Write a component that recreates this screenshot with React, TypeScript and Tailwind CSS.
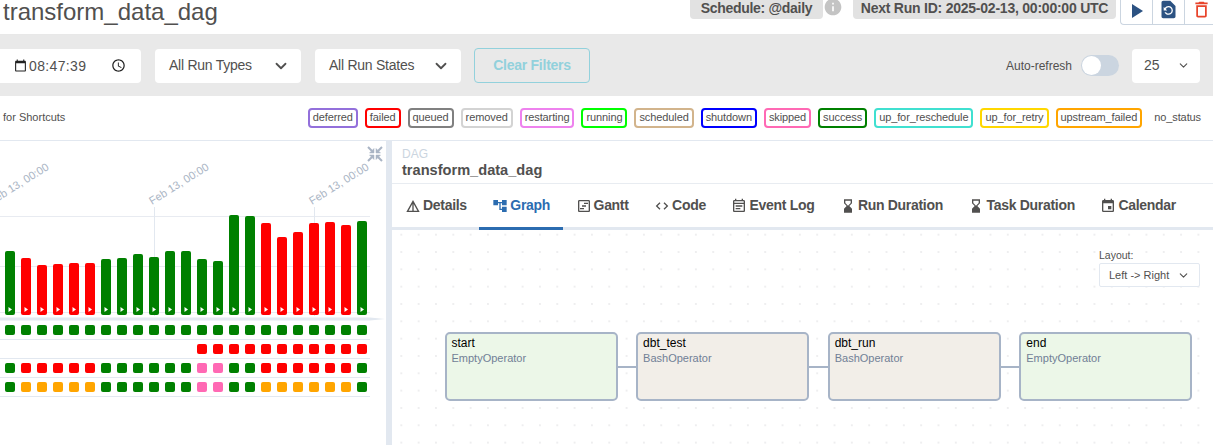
import React from "react";
import { MdDetails, MdAccountTree, MdOutlineViewTimeline, MdOutlineEventNote, MdHourglassBottom, MdEvent, MdPlayArrow, MdRestorePage, MdDeleteOutline, MdInfo, MdOutlineAccessTime, MdCalendarToday } from "react-icons/md";
import { BiCode } from "react-icons/bi";
import { ChevronDown } from "lucide-react";

const font = { fontFamily: '"Liberation Sans", Arial, sans-serif' };

const chips: [string, string][] = [
  ["deferred", "border-[#9370db]"],
  ["failed", "border-[#ff0000]"],
  ["queued", "border-[#808080]"],
  ["removed", "border-[#d3d3d3]"],
  ["restarting", "border-[#ee82ee]"],
  ["running", "border-[#00ff00]"],
  ["scheduled", "border-[#d2b48c]"],
  ["shutdown", "border-[#0000ff]"],
  ["skipped", "border-[#ff69b4]"],
  ["success", "border-[#008000]"],
  ["up_for_reschedule", "border-[#40e0d0]"],
  ["up_for_retry", "border-[#ffd700]"],
  ["upstream_failed", "border-[#ffa500]"],
  ["no_status", "border-transparent"],
];

const tops = [348, 369, 390, 387, 384, 384, 372, 369, 357, 366, 348, 348, 372, 378, 240, 243, 264, 306, 291, 264, 261, 270, 258];
const G = "#008000", R = "#ff0000", P = "#ff69b4", O = "#ffa500";
const barColors = [G, R, R, R, R, R, G, G, G, G, G, G, G, G, G, G, R, R, R, R, R, R, G];

const rows: (string | null)[][] = [
  Array(23).fill(G),
  [...Array(12).fill(null), ...Array(11).fill(R)],
  [G, R, R, R, R, R, G, G, G, G, G, G, P, P, G, G, R, R, R, R, R, R, G],
  [G, O, O, O, O, O, G, G, G, G, G, G, P, P, G, G, O, O, O, O, O, O, G],
];

function Chart() {
  return (
    <svg width="386" height="180" viewBox="0 141 386 180" className="block shrink-0">
      {[216, 266, 312].map((y) => (
        <line key={y} x1="0" x2="370" y1={y + 0.5} y2={y + 0.5} stroke="#e8ebf1" />
      ))}
      {[154, 314].map((x) => (
        <line key={x} x1={x + 0.5} x2={x + 0.5} y1="207" y2="316" stroke="#e2e8f0" />
      ))}
      {[-6, 154, 314].map((x) => (
        <text key={x} x={x - 2} y="205" fontSize="11" fill="#a9b4c4" transform={`rotate(-32 ${x - 2} 205)`} style={font}>
          Feb 13, 00:00
        </text>
      ))}
      <path d="M0 317.5 H370 L385 319 L370 320.5 H0 Z" fill="#e2e8f0" />
      {tops.map((t, i) => {
        const y = 135 + t / 3;
        const x = 5 + i * 16;
        return (
          <g key={i}>
            <rect x={x} y={y} width="10" height={315 - y} rx="2" fill={barColors[i]} />
            <path d={`M${x + 3.5} 307 L${x + 7} 309.5 L${x + 3.5} 312 Z`} fill="#ffffff" />
          </g>
        );
      })}
    </svg>
  );
}

function CollapseIcon() {
  return (
    <svg width="16" height="16" viewBox="0 0 16 16" className="absolute left-[367px] top-[5px]" fill="#a9b4c4" stroke="#a9b4c4">
      <path d="M1 1 L5 5 M15 1 L11 5 M1 15 L5 11 M15 15 L11 11" strokeWidth="2" />
      <path d="M7 7 V2.5 L2.5 7 Z M9 7 V2.5 L13.5 7 Z M7 9 V13.5 L2.5 9 Z M9 9 V13.5 L13.5 9 Z" strokeWidth="0.5" />
    </svg>
  );
}

function Node({ name, op, bg }: { name: string; op: string; bg: string }) {
  return (
    <div className={`h-[69px] w-[173px] shrink-0 rounded-[5px] border-2 border-[#a7b4c7] px-[5px] pt-[1px] ${bg}`}>
      <div className="text-[12px] leading-[16px] text-black">{name}</div>
      <div className="text-[11px] leading-[14px] text-[#718096]">{op}</div>
    </div>
  );
}

const Edge = () => <div className="h-[2px] w-[18.6px] shrink-0 bg-[#a7b4c7]" />;

const tabs: [string, React.ComponentType<{ size?: number; className?: string }>, boolean][] = [
  ["Details", MdDetails, false],
  ["Graph", MdAccountTree, true],
  ["Gantt", MdOutlineViewTimeline, false],
  ["Code", BiCode, false],
  ["Event Log", MdOutlineEventNote, false],
  ["Run Duration", MdHourglassBottom, false],
  ["Task Duration", MdHourglassBottom, false],
  ["Calendar", MdEvent, false],
];

export default function App() {
  return (
    <div style={font} className="h-[445px] w-[1213px] overflow-hidden bg-white text-[#51504f]">
      <header className="flex h-[35px] items-start overflow-hidden border-b border-[#e8e8e8]">
        <h1 className="ml-[3px] text-[24px] leading-[24px] text-[#51504f]">transform_data_dag</h1>
        <div className="ml-auto flex items-start">
          <span className="flex h-[19px] w-[133px] items-center justify-center rounded-b-[4px] bg-[#e2e2e2] pb-[3px] text-[14px] font-bold tracking-[-0.3px] text-[#51504f]">Schedule: @daily</span>
          <MdInfo size={20} className="mr-[10px] mt-[-3px] text-[#c4c4c4]" />
          <span className="flex h-[19px] w-[263px] items-center justify-center rounded-b-[4px] bg-[#e2e2e2] pb-[3px] text-[14px] font-bold tracking-[-0.23px] text-[#51504f]">Next Run ID: 2025-02-13, 00:00:00 UTC</span>
          <div className="ml-[4px] flex h-[25px] w-[93px] rounded-bl-[4px] border-b border-l border-[#cbd5e0]">
            <div className="flex w-[32px] items-center justify-center border-r border-[#cbd5e0]"><MdPlayArrow size={24} className="mt-[-2px] text-[#2c5282]" /></div>
            <div className="flex w-[33px] items-center justify-center border-r border-[#cbd5e0]"><MdRestorePage size={21} className="mt-[-6px] text-[#2c5282]" /></div>
            <div className="flex w-[28px] items-center justify-center pl-[4px]"><MdDeleteOutline size={21} className="mt-[-6px] text-[#e8442b]" /></div>
          </div>
        </div>
      </header>

      <div className="flex h-[61px] items-center bg-[#e9e9e9] pr-[13px]">
        <div className="ml-[-20px] flex h-[34px] w-[161px] items-center rounded-[4px] bg-white pl-[34px] pr-[15px] text-[14px]">
          <MdCalendarToday size={13} className="mr-[2px] text-[#222]" />
          <span className="mt-[1px] tracking-[0.35px]">08:47:39</span>
          <MdOutlineAccessTime size={15} className="ml-auto text-[#222]" />
        </div>
        <div className="ml-[14px] flex h-[34px] w-[146px] items-center justify-between rounded-[4px] bg-white pl-[14px] pr-[11px] text-[14px] tracking-[-0.25px]">
          <span>All Run Types</span> <ChevronDown size={18} strokeWidth={2.4} />
        </div>
        <div className="ml-[14px] flex h-[34px] w-[146px] items-center justify-between rounded-[4px] bg-white pl-[14px] pr-[11px] text-[14px] tracking-[-0.25px]">
          <span>All Run States</span> <ChevronDown size={18} strokeWidth={2.4} />
        </div>
        <div className="ml-[13px] flex h-[35px] w-[116px] items-center justify-center rounded-[4px] border border-[#92d1dc] pb-[1px] text-[14px] font-bold tracking-[-0.25px] text-[#92d1dc]">Clear Filters</div>
        <span className="ml-auto text-[12px]">Auto-refresh</span>
        <div className="ml-[9px] flex h-[21px] w-[38px] items-center rounded-full bg-[#cbd5e0] p-[1px]">
          <div className="h-[19px] w-[19px] rounded-full bg-white" />
        </div>
        <div className="ml-[13px] flex h-[34px] w-[68px] items-center justify-between rounded-[4px] bg-white pl-[12px] pr-[10px] text-[14px]">
          <span>25</span> <ChevronDown size={13} strokeWidth={2} />
        </div>
      </div>

      <div className="flex h-[45px] items-center border-b border-[#e2e8f0] pb-[1px]">
        <span className="ml-[3px] text-[11px]">for Shortcuts</span>
        <div className="ml-auto mr-[7px] flex gap-[7px]">
          {chips.map(([t, c]) => (
            <span key={t} className={`flex h-[20px] items-center rounded-[4px] border-2 px-[3px] text-[11px] tracking-[-0.105px] ${c}`}>{t}</span>
          ))}
        </div>
      </div>

      <div className="flex h-[304px]">
        <div className="w-[386px] shrink-0 overflow-hidden">
          <div className="relative">
            <CollapseIcon />
            <Chart />
          </div>
          <div className="w-[370px]">
            {rows.map((r, i) => (
              <div key={i} className="flex h-[19px] items-center gap-[6px] border-b border-[#e2e8f0] pl-[5px]">
                {r.map((c, j) =>
                  c ? (
                    <div key={j} className="h-[10px] w-[10px] shrink-0 rounded-[2px]" style={{ backgroundColor: c }} />
                  ) : (
                    <div key={j} className="h-[10px] w-[10px] shrink-0" />
                  )
                )}
              </div>
            ))}
          </div>
        </div>
        <div className="w-[6px] shrink-0 bg-[#e2e8f0]" />
        <div className="flex min-w-0 flex-1 flex-col">
          <div className="h-[43px] border-b border-[#e8ecf1] pl-[10px] pt-[6px]">
            <div className="text-[12px] leading-[14px] text-[#cbd5e0]">DAG</div>
            <div className="mt-[1px] text-[14.6px] font-bold leading-[16px] text-[#51504f]">transform_data_dag</div>
          </div>
          <div className="flex h-[46px] border-b-[3px] border-[#e2e8f0]">
            {tabs.map(([t, I, active]) => (
              <div key={t} className={`mb-[-3px] flex items-center gap-[2px] whitespace-nowrap border-b-[3px] pl-[13px] pr-[12.5px] text-[14px] font-bold tracking-[-0.3px] ${active ? "border-[#2b6cb0] text-[#2b6cb0]" : "border-transparent text-[#51504f]"}`}>
                <I size={16} />
                {t}
              </div>
            ))}
          </div>
          <div className="relative flex-1 bg-[radial-gradient(#a8a8ae_0.6px,transparent_0.7px)] bg-[size:17.33px_17.33px] bg-[position:0.67px_-4px]">
            <div className="absolute left-[707px] top-[18px] w-[101px]">
              <div className="text-[10.5px] leading-[15px]">Layout:</div>
              <div className="flex h-[24px] items-center justify-between rounded-[2px] border border-[#e2e8f0] bg-white pl-[9px] pr-[9px] text-[11px]">
                Left -&gt; Right <ChevronDown size={13} />
              </div>
            </div>
            <div className="flex items-center pl-[52.5px] pt-[102px]">
              <Node name="start" op="EmptyOperator" bg="bg-[#ecf7e8]" />
              <Edge />
              <Node name="dbt_test" op="BashOperator" bg="bg-[#f2eee8]" />
              <Edge />
              <Node name="dbt_run" op="BashOperator" bg="bg-[#f2eee8]" />
              <Edge />
              <Node name="end" op="EmptyOperator" bg="bg-[#ecf7e8]" />
            </div>
          </div>
        </div>
      </div>
    </div>
  );
}
